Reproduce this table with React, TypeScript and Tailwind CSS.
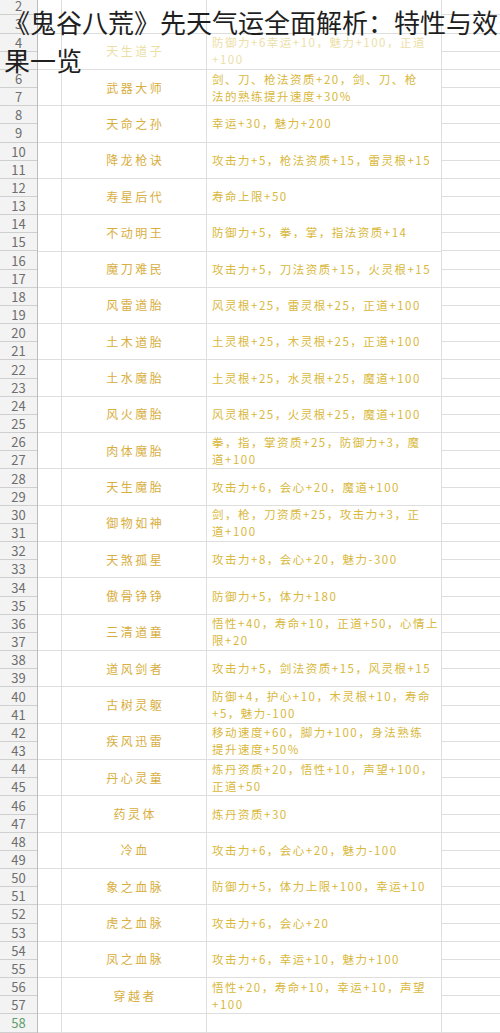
import React from "react";

type Entry = { name: string; lines: string[] };

const entries: Entry[] = [
  { name: "", lines: [] },
  { name: "天生道子", lines: ["防御力+6幸运+10，魅力+100，正道", "+100"] },
  { name: "武器大师", lines: ["剑、刀、枪法资质+20，剑、刀、枪", "法的熟练提升速度+30%"] },
  { name: "天命之孙", lines: ["幸运+30，魅力+200"] },
  { name: "降龙枪诀", lines: ["攻击力+5，枪法资质+15，雷灵根+15"] },
  { name: "寿星后代", lines: ["寿命上限+50"] },
  { name: "不动明王", lines: ["防御力+5，拳，掌，指法资质+14"] },
  { name: "魔刀难民", lines: ["攻击力+5，刀法资质+15，火灵根+15"] },
  { name: "风雷道胎", lines: ["风灵根+25，雷灵根+25，正道+100"] },
  { name: "土木道胎", lines: ["土灵根+25，木灵根+25，正道+100"] },
  { name: "土水魔胎", lines: ["土灵根+25，水灵根+25，魔道+100"] },
  { name: "风火魔胎", lines: ["风灵根+25，火灵根+25，魔道+100"] },
  { name: "肉体魔胎", lines: ["拳，指，掌资质+25，防御力+3，魔", "道+100"] },
  { name: "天生魔胎", lines: ["攻击力+6，会心+20，魔道+100"] },
  { name: "御物如神", lines: ["剑，枪，刀资质+25，攻击力+3，正", "道+100"] },
  { name: "天煞孤星", lines: ["攻击力+8，会心+20，魅力-300"] },
  { name: "傲骨铮铮", lines: ["防御力+5，体力+180"] },
  { name: "三清道童", lines: ["悟性+40，寿命+10，正道+50，心情上", "限+20"] },
  { name: "道风剑者", lines: ["攻击力+5，剑法资质+15，风灵根+15"] },
  { name: "古树灵躯", lines: ["防御+4，护心+10，木灵根+10，寿命", "+5，魅力-100"] },
  { name: "疾风迅雷", lines: ["移动速度+60，脚力+100，身法熟练", "提升速度+50%"] },
  { name: "丹心灵童", lines: ["炼丹资质+20，悟性+10，声望+100，", "正道+50"] },
  { name: "药灵体", lines: ["炼丹资质+30"] },
  { name: "冷血", lines: ["攻击力+6，会心+20，魅力-100"] },
  { name: "象之血脉", lines: ["防御力+5，体力上限+100，幸运+10"] },
  { name: "虎之血脉", lines: ["攻击力+6，会心+20"] },
  { name: "凤之血脉", lines: ["攻击力+6，幸运+10，魅力+100"] },
  { name: "穿越者", lines: ["悟性+20，寿命+10，幸运+10，声望", "+100"] },
];

const RowNum = ({ n, green }: { n: number; green?: boolean }) => (
  <div
    className={
      "h-[18.17px] flex items-center justify-center border-b border-[#cfcfcf] text-[13px] leading-none " +
      (green ? "text-[#5f9e6e]" : "text-[#6e6e6e]")
    }
  >
    {n}
  </div>
);

const Item = ({ entry, idx }: { entry: Entry; idx: number }) => {
  const first = 2 + idx * 2;
  const faded = idx === 1;
  return (
    <div className="flex h-[36.34px]">
      <div className="w-[38px] shrink-0 bg-[#f3f3f3] border-r border-[#bdbdbd]">
        <RowNum n={first} />
        <RowNum n={first + 1} />
      </div>
      <div className="w-[24px] shrink-0 border-r border-b border-[#dedede]" />
      <div
        className={
          "w-[145px] shrink-0 flex items-center justify-center border-r border-b border-[#dedede] text-[12px] tracking-[2.5px] pl-[2.5px] " +
          (faded ? "text-[#ecdfa6]" : "text-[#d8ae3e]")
        }
      >
        {entry.name}
      </div>
      <div
        className={
          "w-[235px] shrink-0 flex flex-col justify-center pl-[5px] border-r border-b border-[#dedede] text-[11.5px] leading-[17px] tracking-[1.5px] whitespace-nowrap " +
          (faded ? "text-[#ece0a8]" : "text-[#d9b83c]")
        }
      >
        {entry.lines.map((l) => (
          <div key={l}>{l}</div>
        ))}
      </div>
      <div className="flex-1 flex flex-col">
        <div className="h-[18.17px] border-b border-[#dedede]" />
        <div className="h-[18.17px] border-b border-[#dedede]" />
      </div>
    </div>
  );
};

export default function App() {
  return (
    <div
      className="relative w-[500px] h-[1033px] overflow-hidden bg-white"
      style={{ fontFamily: '"Noto Sans CJK SC", "Liberation Sans", sans-serif' }}
    >
      <div className="-mt-[2.8px]">
        {entries.map((e, i) => (
          <Item key={i} entry={e} idx={i} />
        ))}
        <div className="flex h-[18.17px]">
          <div className="w-[38px] shrink-0 bg-[#f3f3f3] border-r border-[#bdbdbd]">
            <RowNum n={58} green />
          </div>
          <div className="w-[24px] shrink-0 border-r border-b border-[#dedede]" />
          <div className="w-[145px] shrink-0 border-r border-b border-[#dedede]" />
          <div className="w-[235px] shrink-0 border-r border-b border-[#dedede]" />
          <div className="flex-1 border-b border-[#dedede]" />
        </div>
      </div>

      {/* title laid over the sheet */}
      <div className="absolute top-0 left-0 right-0 pl-[4px] pt-[3px] text-[26px] leading-[38px] text-[#1f1f1f]">
        《鬼谷八荒》先天气运全面解析：特性与效果一览
      </div>
    </div>
  );
}
